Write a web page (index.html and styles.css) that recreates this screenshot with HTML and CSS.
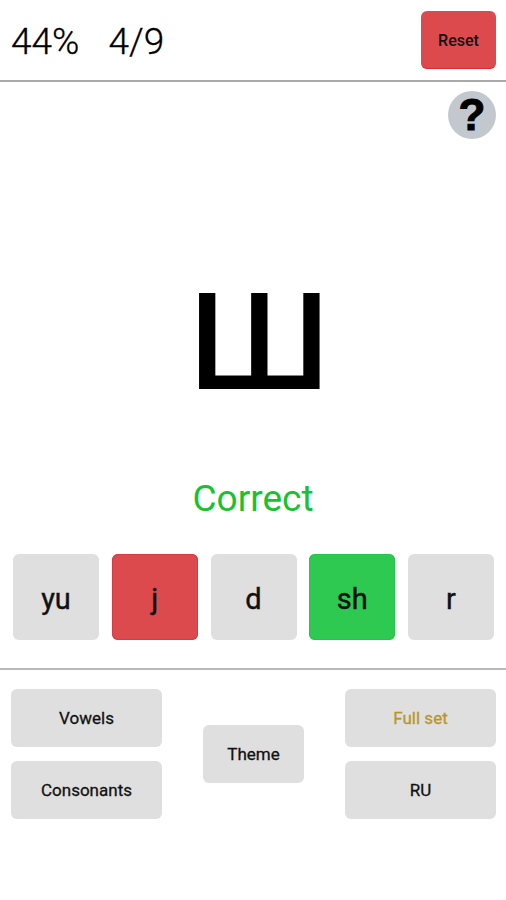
FILE: index.html
```html
<!DOCTYPE html>
<html lang="en">

<head>
    <meta charset="UTF-8">
    <meta name="viewport" content="width=device-width, initial-scale=1.0">
    <title>Alphabet Trainer</title>
    <link rel="stylesheet" href="styles.css">
</head>

<body>

    <div class="topBar">
        <div class="score">
            <span>44%</span>
            <span>4/9</span>
        </div>
        <button class="btn resetBtn">Reset</button>
    </div>

    <div class="stage">
        <div class="helpRow">
            <div class="help">?</div>
        </div>
        <div class="letter">Ш</div>
        <div class="result">Correct</div>
    </div>

    <div class="answers">
        <button class="btn answer">yu</button>
        <button class="btn answer wrong">j</button>
        <button class="btn answer">d</button>
        <button class="btn answer right">sh</button>
        <button class="btn answer">r</button>
    </div>

    <div class="options">
        <div class="optionCol">
            <button class="btn option">Vowels</button>
            <button class="btn option">Consonants</button>
        </div>
        <button class="btn theme">Theme</button>
        <div class="optionCol">
            <button class="btn option active">Full set</button>
            <button class="btn option">RU</button>
        </div>
    </div>

</body>

</html>
```

FILE: styles.css
```css
body {
    margin: 0;
    height: 900px;
    overflow: hidden;
    background-color: #fff;
    font-family: Roboto, "Liberation Sans", sans-serif;
    color: #000;
}

.btn {
    display: flex;
    align-items: center;
    justify-content: center;
    padding: 0;
    border: none;
    border-radius: 6px;
    background-color: #dfdfdf;
    font-family: inherit;
    color: #111;
}

.topBar {
    display: flex;
    align-items: center;
    justify-content: space-between;
    height: 80px;
    padding: 0 10px 0 11px;
    border-bottom: 2px solid #a9a9a9;
}

.score {
    display: flex;
    gap: 29px;
    padding-top: 3px;
    font-size: 37px;
    font-weight: 300;
    -webkit-text-stroke: 0.3px #000;
}

.resetBtn {
    width: 75px;
    height: 58px;
    padding-top: 2px;
    border-bottom: 1px solid #dc2a30;
    background-color: #dc4a4d;
    font-size: 16px;
    font-weight: 500;
}

.stage {
    display: flex;
    flex-direction: column;
    align-items: center;
    height: 472px;
}

.helpRow {
    display: flex;
    justify-content: flex-end;
    width: 100%;
    padding: 9px 10px 0 0;
    box-sizing: border-box;
}

.help {
    width: 48px;
    height: 48px;
    border-radius: 50%;
    background-color: #c3c8ce;
    font-family: "Liberation Sans", sans-serif;
    font-size: 44px;
    font-weight: 700;
    line-height: 48px;
    text-align: center;
    -webkit-text-stroke: 1px #000;
}

.letter {
    margin-top: 103px;
    padding-left: 12px;
    font-family: "Open Sans", sans-serif;
    font-size: 135px;
    font-weight: 600;
    line-height: 190px;
    transform: scaleX(1.03);
}

.result {
    margin-top: 47px;
    font-size: 37px;
    line-height: 40px;
    color: #17c22f;
}

.answers {
    display: grid;
    grid-template-columns: repeat(5, 86px);
    justify-content: space-between;
    height: 86px;
    padding: 0 12px 0 13px;
}

.answer {
    padding-top: 3px;
    font-size: 29px;
    -webkit-text-stroke: 0.4px #111;
}

.wrong {
    background-color: #dc4a4d;
    box-shadow: inset 0 0 0 1px #d93a40;
}

.right {
    background-color: #2dc951;
    box-shadow: inset 0 0 0 1px #22c747;
}

.options {
    display: flex;
    align-items: center;
    justify-content: space-between;
    margin-top: 28px;
    padding: 19px 10px 0 11px;
    border-top: 2px solid #b9b9b9;
}

.optionCol {
    display: flex;
    flex-direction: column;
    gap: 14px;
}

.option {
    width: 151px;
    height: 58px;
    font-size: 17px;
    -webkit-text-stroke: 0.3px currentColor;
}

.theme {
    width: 101px;
    height: 58px;
    font-size: 17px;
    -webkit-text-stroke: 0.3px currentColor;
}

.active {
    color: #b8962a;
}
```
